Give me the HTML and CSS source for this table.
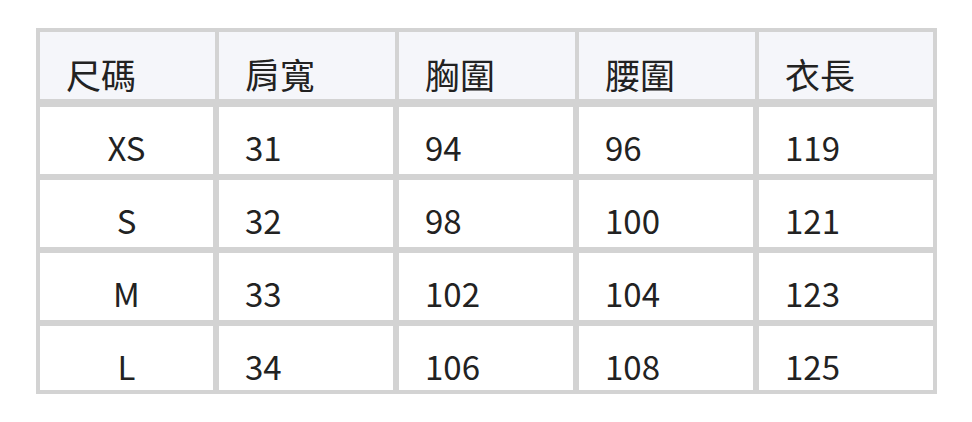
FILE: index.html
```html
<!DOCTYPE html>
<html lang="zh-Hant">
<head>
<meta charset="utf-8">
<title>尺碼表</title>
<link rel="stylesheet" href="styles.css">
</head>
<body>
<div class="size-table">
  <div class="row head">
    <div class="cell">尺碼</div>
    <div class="cell">肩寬</div>
    <div class="cell">胸圍</div>
    <div class="cell">腰圍</div>
    <div class="cell">衣長</div>
  </div>
  <div class="body">
    <div class="row">
      <div class="cell size">XS</div>
      <div class="cell">31</div>
      <div class="cell">94</div>
      <div class="cell">96</div>
      <div class="cell">119</div>
    </div>
    <div class="row">
      <div class="cell size">S</div>
      <div class="cell">32</div>
      <div class="cell">98</div>
      <div class="cell">100</div>
      <div class="cell">121</div>
    </div>
    <div class="row">
      <div class="cell size">M</div>
      <div class="cell">33</div>
      <div class="cell">102</div>
      <div class="cell">104</div>
      <div class="cell">123</div>
    </div>
    <div class="row last">
      <div class="cell size">L</div>
      <div class="cell">34</div>
      <div class="cell">106</div>
      <div class="cell">108</div>
      <div class="cell">125</div>
    </div>
  </div>
</div>
</body>
</html>
```
FILE: styles.css
```css
html, body {
  margin: 0;
  padding: 0;
  background: #ffffff;
}
body {
  font-family: "Noto Sans CJK TC", "Noto Sans", sans-serif;
  color: #222222;
}
.size-table {
  margin: 28px 0 0 36px;
  width: 901px;
  box-sizing: border-box;
  padding: 4px;
  background: #d3d3d3;
  display: flex;
  flex-direction: column;
  gap: 8px;
}
.body {
  display: flex;
  flex-direction: column;
  gap: 6px;
}
.row {
  display: grid;
  grid-template-columns: 175px 176px 176px 176px 174px;
  column-gap: 4px;
  height: 67px;
}
.row.last {
  height: 64px;
}
.cell {
  box-sizing: border-box;
  background: #ffffff;
  font-size: 33px;
  line-height: 33px;
  padding: 24px 0 0 26px;
  white-space: nowrap;
}
.head .cell {
  background: #f5f6fa;
  font-size: 35px;
  line-height: 35px;
  padding-top: 24px;
}
.body .cell:not(:last-child) {
  border-right: 2px solid #d3d3d3;
}
.cell.size {
  padding-left: 0;
  text-align: center;
}
```
